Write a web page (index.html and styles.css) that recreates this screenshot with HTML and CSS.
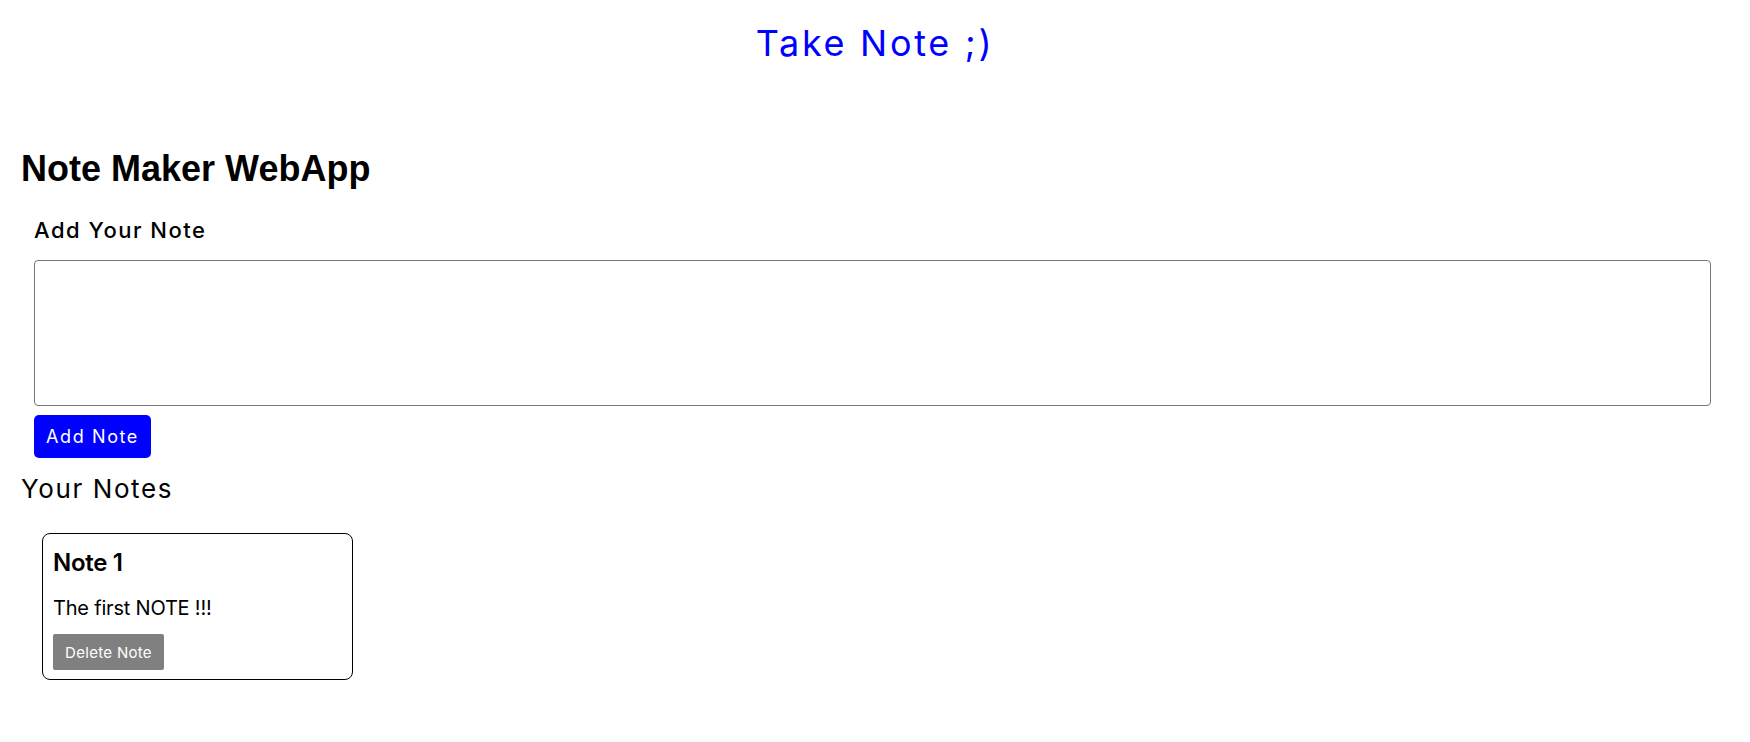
FILE: index.html
```html
<!DOCTYPE html>
<html lang="en">
<head>
<meta charset="utf-8">
<title>Take Note ;)</title>
<link rel="stylesheet" href="styles.css">
</head>
<body>
<header class="site-header">
  <h1 class="site-title">Take Note ;)</h1>
</header>
<main class="container">
  <h1 class="app-title">Note Maker WebApp</h1>
  <section class="add-note">
    <h2 class="add-label">Add Your Note</h2>
    <textarea class="note-input"></textarea>
    <button class="btn-add">Add Note</button>
  </section>
  <h2 class="notes-title">Your Notes</h2>
  <div class="notes">
    <div class="note-card">
      <h3 class="note-title">Note 1</h3>
      <p class="note-text">The first NOTE !!!</p>
      <button class="btn-delete">Delete Note</button>
    </div>
  </div>
</main>
</body>
</html>
```

FILE: styles.css
```css
* { box-sizing: border-box; }
body {
  margin: 0;
  font-family: Inter, "Open Sans", sans-serif;
  color: #000;
  background: #fff;
}
.site-header { padding-top: 21px; }
.site-title {
  margin: 0;
  text-align: center;
  font-size: 36px;
  line-height: 44px;
  font-weight: 400;
  color: #0000ff;
  letter-spacing: 2.7px;
}
.container { padding: 0 39px 0 21px; }
.app-title {
  margin: 84px 0 0;
  font-family: "Liberation Sans", Arial, sans-serif;
  font-weight: 700;
  font-size: 36px;
  line-height: 40px;
}
.add-note {
  padding-left: 13px;
  display: flex;
  flex-direction: column;
  align-items: flex-start;
}
.add-label {
  margin: 27px 0 0;
  font-size: 22px;
  line-height: 28px;
  font-weight: 500;
  letter-spacing: 1.5px;
}
.note-input {
  display: block;
  margin-top: 16px;
  width: 100%;
  height: 146px;
  border: 1px solid #767676;
  border-radius: 4px;
  resize: none;
  font-family: inherit;
}
.btn-add {
  margin-top: 9px;
  width: 117px;
  height: 43px;
  padding: 0;
  border: none;
  border-radius: 5px;
  background: #0000ff;
  color: #fff;
  font-family: inherit;
  font-size: 18px;
  letter-spacing: 1.6px;
  cursor: pointer;
}
.notes-title {
  margin: 15px 0 0;
  font-size: 26px;
  line-height: 32px;
  font-weight: 400;
  letter-spacing: 1.6px;
}
.notes {
  display: flex;
  flex-wrap: wrap;
  gap: 16px;
  padding-left: 21px;
  margin-top: 28px;
}
.note-card {
  width: 311px;
  height: 147px;
  border: 1px solid #000;
  border-radius: 8px;
  padding: 14px 10px 9px;
}
.note-title {
  margin: 0;
  font-size: 24px;
  line-height: 30px;
  font-weight: 600;
  letter-spacing: -0.3px;
}
.note-text {
  margin: 17px 0 0;
  font-size: 20px;
  line-height: 26px;
  font-weight: 400;
  letter-spacing: -0.2px;
}
.btn-delete {
  display: block;
  margin-top: 13px;
  width: 111px;
  height: 36px;
  border: none;
  border-radius: 2px;
  background: #808080;
  color: #fff;
  font-family: inherit;
  font-size: 15px;
  letter-spacing: 0.3px;
  cursor: pointer;
}
```
